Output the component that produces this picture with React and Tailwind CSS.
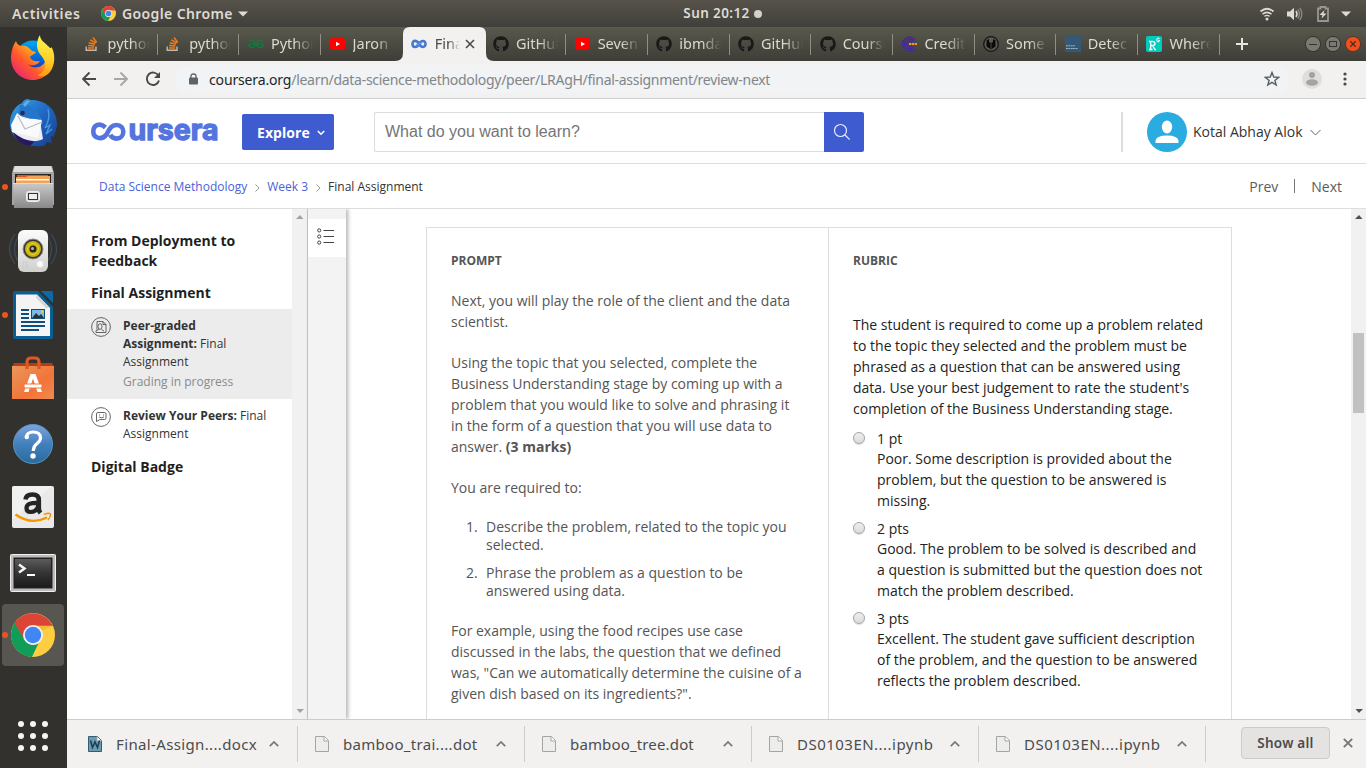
import React from "react";
import { FaGithub } from "react-icons/fa";
import { SiGeeksforgeeks } from "react-icons/si";

const UI = "font-['Noto_Sans','Open_Sans',sans-serif]";

function ChromeLogo({ size }) {
  return (
    <svg width={size} height={size} viewBox="0 0 44 44" className="shrink-0">
      <circle cx="22" cy="22" r="22" fill="#ffcd40" />
      <path d="M3 11 A22 22 0 0 1 41 11.5 L42 13 H22 L13.5 27 Z" fill="#db4437" />
      <path d="M3.5 10.2 L13.8 27 A9.8 9.8 0 0 0 27.5 30.3 L21 44 A22 22 0 0 1 3.5 10.2 Z" fill="#0f9d58" />
      <path d="M22 12.2 H42 L31.2 18 Z" fill="#e9a92e" opacity=".45" />
      <circle cx="22" cy="22" r="10" fill="#f1f1f1" />
      <circle cx="22" cy="22" r="8.2" fill="#4285f4" />
    </svg>
  );
}

function Firefox() {
  return (
    <svg width="46" height="48" viewBox="0 0 46 48">
      <defs>
        <linearGradient id="ffa" x1="1" y1="0" x2="0" y2="1">
          <stop offset="0" stopColor="#fff44f" />
          <stop offset=".35" stopColor="#ffb01f" />
          <stop offset=".6" stopColor="#ff5a2b" />
          <stop offset="1" stopColor="#e3128b" />
        </linearGradient>
        <linearGradient id="ffb" x1="0" y1="0" x2="0" y2="1">
          <stop offset="0" stopColor="#00a7f0" />
          <stop offset=".6" stopColor="#0a57d0" />
          <stop offset="1" stopColor="#3b1b8f" />
        </linearGradient>
        <linearGradient id="ffc" x1="0" y1="0" x2="0" y2="1">
          <stop offset="0" stopColor="#fff44f" />
          <stop offset=".6" stopColor="#ffd02a" />
          <stop offset="1" stopColor="#ff9a14" />
        </linearGradient>
      </defs>
      <circle cx="23" cy="24" r="18.5" fill="url(#ffb)" />
      <path d="M6 6 C7 9 8 10 11 11 C15 10 18 11 22 16 L26 17 C24 20 21 20 20 22 C21 26 27 27 30 26 C27 31 21 31 18 29 C23 35 33 33 36 25 L44 22 C44 36 34 45 23 45 C10 45 1 35 1 23 C1 17 3 10 6 6Z" fill="url(#ffa)" />
      <path d="M30 0 C30 5 34 7 38 11 C40 13 41 14 41.5 12 C45 18 46 29 40 37 C36 42 30 42 28 40 C35 37 37 30 34 25 C32 20 27 18 27 10 C27 6 28 3 30 0Z" fill="url(#ffc)" />
    </svg>
  );
}

function Thunderbird() {
  return (
    <svg width="50" height="50" viewBox="0 0 50 50">
      <defs>
        <linearGradient id="tb" x1="0" y1="0" x2="1" y2="1">
          <stop offset="0" stopColor="#31a4e6" />
          <stop offset=".5" stopColor="#2068c4" />
          <stop offset="1" stopColor="#173b8a" />
        </linearGradient>
      </defs>
      <path d="M14 5 C16 1 20 0 22 2 C35 1 49 10 49 26 C49 32 46 36 46 39 L43 38 L44 45 L39 44 L36 48 C22 50 4 44 2 28 C1 18 6 8 14 5Z" fill="url(#tb)" />
      <path d="M5 34 C8 43 14 46 22 48 L26 44Z" fill="#29175f" />
      <path d="M8 17 L32 23 L35 41 C25 46 13 41 5 34 Z" fill="#ececf2" />
      <path d="M3 27 L9 15 L16 21 L32 20 L34 23 L30 40 L4 34Z" fill="#fafafc" />
      <path d="M10 18 L17 31 L34 24" fill="none" stroke="#b9bcc6" strokeWidth="1.2" />
      <path d="M12 7 C22 6 31 11 33 22 C25 20 18 22 11 15 Z" fill="#2575cc" />
      <path d="M15 7 C18 2 20 2 22 3 L17 9Z" fill="#6aacd8" />
      <circle cx="14.5" cy="15" r="2.3" fill="#262c54" />
      <path d="M40 11 C42 18 40 25 37 30 L42 27 L38 36 L44 31" fill="none" stroke="#4a9be0" strokeWidth="1.3" />
    </svg>
  );
}

function Files() {
  return (
    <svg width="44" height="46" viewBox="0 0 44 46">
      <defs>
        <linearGradient id="fl" x1="0" y1="0" x2="0" y2="1">
          <stop offset="0" stopColor="#c9c9c9" />
          <stop offset="1" stopColor="#898989" />
        </linearGradient>
      </defs>
      <path d="M3 2 H41 L43 9 V41 H1 V9Z" fill="#a5a5a5" />
      <path d="M4 2 H40 L42 8 H2Z" fill="#dedede" />
      <rect x="4" y="10" width="36" height="10" fill="#2b2624" />
      <rect x="6" y="11" width="31" height="4" fill="#d4592a" />
      <path d="M5 13 H15 L17 12 H39 V19 H5Z" fill="#f5a455" />
      <rect x="5" y="15" width="33" height="1.4" fill="#fff" />
      <path d="M2 19 H42 V44 H3Z" fill="url(#fl)" />
      <path d="M2 19.5 H42" stroke="#ddd" />
      <rect x="15.5" y="27.500" width="13" height="10" rx="2" fill="#ddd" stroke="#eee" />
      <rect x="17.500" y="29.500" width="9" height="6" fill="#eee" stroke="#333" />
    </svg>
  );
}

function Rhythmbox() {
  return (
    <svg width="50" height="48" viewBox="0 0 50 48" className="-mt-[3px]">
      <defs>
        <linearGradient id="rb" x1="0" y1="0" x2="0" y2="1">
          <stop offset="0" stopColor="#fcfcfc" />
          <stop offset="1" stopColor="#cfcfcb" />
        </linearGradient>
      </defs>
      <g fill="none" stroke="#3d4c5c" strokeWidth="1.2">
        <path d="M7 8 Q-4 23 7 38 M10 11 Q3 23 10 35 M43 8 Q54 23 43 38 M40 11 Q47 23 40 35" />
      </g>
      <rect x="10" y="4" width="30" height="42" rx="6" fill="url(#rb)" />
      <circle cx="25" cy="23" r="10" fill="#353535" stroke="#8c8c8c" />
      <circle cx="25" cy="23" r="8" fill="#c7b20a" />
      <circle cx="25" cy="23" r="5.500" fill="none" stroke="#e5d536" />
      <circle cx="25" cy="23" r="3.500" fill="#292929" />
      <circle cx="24.5" cy="22.5" r="1.500" fill="#b5b5b5" />
      <circle cx="32" cy="38" r="3.500" fill="#fafafa" stroke="#ddd" />
      <rect x="15" y="36" width="4" height="5" fill="none" stroke="#ccc" />
    </svg>
  );
}

function Writer() {
  return (
    <svg width="40" height="48" viewBox="0 0 40 48">
      <path d="M2 0 H25 L40 16 V46 Q40 48 38 48 H2 Q0 48 0 46 V2 Q0 0 2 0Z" fill="#0b5e94" />
      <path d="M28 0 H39 Q40 0 40 2 V12Z" fill="#0b6aa8" />
      <path d="M3 3.5 H24 L37 17 V45 H3Z" fill="#f4f4f4" />
      <path d="M24 3.5 L37 17 H33 L23 7Z" fill="#d5d5d5" />
      <path d="M8 19 H16 M8 23 H16 M8 27 H16 M8 31 H32 M8 35 H32 M8 39 H26" stroke="#104f7d" strokeWidth="1.8" />
      <rect x="18.500" y="18.500" width="13" height="9" fill="#7dbbe6" stroke="#104f7d" />
      <path d="M19 27 L23 22 L26 25 L28 23 L31 27Z" fill="#313131" />
      <circle cx="29.500" cy="20.500" r="1.200" fill="#f5ce46" />
    </svg>
  );
}

function Software() {
  return (
    <svg width="42" height="44" viewBox="0 0 42 44" className="-mt-[2px]">
      <defs>
        <linearGradient id="sw" x1="0" y1="0" x2="1" y2="1">
          <stop offset="0" stopColor="#e8975b" />
          <stop offset=".6" stopColor="#f37438" />
          <stop offset="1" stopColor="#f08a50" />
        </linearGradient>
      </defs>
      <path d="M2 7 H40 L42 11 H0Z" fill="#b43c16" />
      <rect y="10" width="42" height="33" fill="url(#sw)" />
      <path d="M15 13 V6 Q15 2 19 2 H23 Q27 2 27 6 V13" fill="none" stroke="#df5724" strokeWidth="3.200" />
      <path d="M18.500 18 H23.500 L30 36 H25.500 L21 22.500 L16.500 36 H12Z" fill="#fff" />
      <rect x="12" y="28" width="18" height="4" rx="1" fill="#fff" stroke="#ee763c" />
    </svg>
  );
}

function Help() {
  return (
    <svg width="42" height="42" viewBox="0 0 42 42" className="mt-[2px] overflow-visible">
      <defs>
        <linearGradient id="hp" x1="0" y1="0" x2="0" y2="1">
          <stop offset="0" stopColor="#7ea3de" />
          <stop offset=".5" stopColor="#4280bd" />
          <stop offset="1" stopColor="#296b9b" />
        </linearGradient>
      </defs>
      <circle cx="21" cy="21" r="19.500" fill="url(#hp)" stroke="#5596c4" />
      <path d="M14 14.500 Q15 9 21 9 Q28.500 9 28.500 15 Q28.500 18 25 20.500 Q21.500 23 21.200 28" fill="none" stroke="#fff" strokeWidth="3.200" />
      <circle cx="14.800" cy="14" r="2.200" fill="#fff" />
      <circle cx="21" cy="33" r="2.700" fill="#fff" />
    </svg>
  );
}

function Amazon() {
  return (
    <svg width="42" height="42" viewBox="0 0 42 42">
      <rect width="42" height="42" rx="2" fill="#e9e9e9" />
      <path d="M0 40 V2 Q0 0 2 0 H40 L0 34Z" fill="#f4f4f4" opacity=".7" />
      <path d="M13.500 13.500 Q14 8.500 20.500 8.500 Q26.800 8.500 26.800 14 V22 Q26.800 25 28.500 27" fill="none" stroke="#242424" strokeWidth="4.600" />
      <path d="M26 16.800 Q14.500 16.500 14.500 22 Q14.500 26 18.500 26 Q25 26 26.500 19" fill="none" stroke="#242424" strokeWidth="4.200" />
      <path d="M3.500 28.500 Q19 39.500 35 31.500" fill="none" stroke="#f79400" strokeWidth="2.400" />
      <path d="M32 28.500 Q37 26.500 38.500 28 Q39 30 36 34" fill="none" stroke="#f79400" strokeWidth="1.500" />
    </svg>
  );
}

function Terminal() {
  return (
    <svg width="46" height="38" viewBox="0 0 46 38" className="mt-[4px]">
      <defs>
        <linearGradient id="tm" x1="0" y1="0" x2="0" y2="1">
          <stop offset="0" stopColor="#5b5b5b" />
          <stop offset=".5" stopColor="#343434" />
          <stop offset="1" stopColor="#1c1c1c" />
        </linearGradient>
      </defs>
      <rect x=".5" y=".5" width="45" height="37" rx="1" fill="#bcbcbc" stroke="#efefef" />
      <rect x="3.500" y="3.500" width="39" height="31" fill="#222" />
      <rect x="5" y="5" width="36" height="28" fill="url(#tm)" />
      <path d="M9 10.500 L14.500 14.500 L9 18.500" fill="none" stroke="#f5f5f5" strokeWidth="2.500" />
      <path d="M17 21 H25" stroke="#fff" strokeWidth="2" />
    </svg>
  );
}

const DOCK = [
  { icon: <Firefox />, running: false },
  { icon: <Thunderbird />, running: false },
  { icon: <Files />, running: true },
  { icon: <Rhythmbox />, running: false },
  { icon: <Writer />, running: true },
  { icon: <Software />, running: false },
  { icon: <Help />, running: false },
  { icon: <Amazon />, running: false },
  { icon: <Terminal />, running: false },
];

function Dot() {
  return <span className="absolute left-[2px] top-1/2 -mt-[3px] size-[6px] rounded-full bg-[#e95420]" />;
}

function Dock() {
  return (
    <aside className="flex w-[67px] shrink-0 flex-col bg-[#32312d]">
      {DOCK.map((d, i) => (
        <div key={i} className="relative flex h-16 w-[66px] items-center justify-center">
          {d.running && <Dot />}
          {d.icon}
        </div>
      ))}
      <div className="relative ml-[2px] mt-[1px] flex size-[62px] items-center justify-center rounded bg-[#585651]">
        <span className="absolute left-0 top-[28px] size-[6px] rounded-full bg-[#e95420]" />
        <ChromeLogo size={44} />
      </div>
      <div className="ml-[18px] mt-[55px] grid w-[30px] grid-cols-3 gap-[6px]">
        {Array.from({ length: 9 }, (_, i) => (
          <span key={i} className="size-[6px] rounded-full bg-[#f5f5f3]" />
        ))}
      </div>
    </aside>
  );
}

function TopBar() {
  return (
    <div className={`grid h-[27px] shrink-0 grid-cols-[600px_245px_521px] items-center bg-linear-to-b from-[#57534b] to-[#403f3a] text-[14px] font-semibold text-[#dfdbd2] ${UI}`}>
      <div className="flex items-center pl-3">
        <span className="w-[89px] tracking-[0.6px]">Activities</span>
        <ChromeLogo size={15} />
        <span className="ml-[6px] whitespace-nowrap tracking-[0.38px]">Google Chrome</span>
        <svg width="10" height="6" className="ml-[5px]"><path d="M0 0.500 H10 L5 5.500Z" fill="#dfdbd2" /></svg>
      </div>
      <div className="flex items-center justify-center">
        <span className="whitespace-nowrap text-[13.500px] tracking-[0.4px]">Sun 20:12</span>
        <span className="ml-1 size-2 rounded-full bg-[#d5d1c8]" />
      </div>
      <div className="flex items-center justify-end pr-[15px]">
        <svg width="16" height="14" viewBox="0 0 16 14" fill="none" stroke="#dfdbd2">
          <path d="M1.500 4.500 Q8 -1 14.500 4.500" strokeWidth="1.700" />
          <path d="M3.500 7.200 Q8 3.500 12.500 7.200" strokeWidth="1.500" />
          <path d="M5.500 9.400 Q8 7.400 10.500 9.400" strokeWidth="1.400" />
          <circle cx="8" cy="12" r="1.500" fill="#dfdbd2" stroke="none" />
        </svg>
        <svg width="16" height="14" viewBox="0 0 16 14" className="ml-3">
          <path d="M0 4.500 H3 L7 .8 V13.200 L3 9.500 H0Z" fill="#dfdbd2" />
          <path d="M9 4 Q11 7 9 10" fill="none" stroke="#dfdbd2" strokeWidth="1.500" />
          <path d="M10.800 2.300 Q14 7 10.800 11.700 M12.800 .8 Q17 7 12.800 13.200" fill="none" stroke="#8d8a83" strokeWidth="1.300" />
        </svg>
        <svg width="12" height="16" viewBox="0 0 12 16" className="ml-[14px]">
          <path d="M1 2.500 H3.500 V1 H8.500 V2.500 H11 V15 H1Z" fill="none" stroke="#99968f" strokeWidth="1.800" />
          <path d="M7.500 4 L2.500 9 H5.500 L4.500 12.500 L9.500 7.500 H6.500Z" fill="#dfdbd2" />
        </svg>
        <svg width="10" height="6" className="ml-3"><path d="M0 0.500 H10 L5 5.500Z" fill="#dfdbd2" /></svg>
      </div>
    </div>
  );
}

const YouTube = () => (
  <svg width="15" height="12" viewBox="0 0 15 12" className="shrink-0">
    <rect width="15" height="12" rx="2.500" fill="#f00" />
    <path d="M6 3.800 L10 6 L6 8.200Z" fill="#fff" />
  </svg>
);
const Github = () => <FaGithub className="size-4 shrink-0 text-[#1b1817]" />;
const Stack = () => (
  <svg width="14" height="16" viewBox="0 0 14 16" fill="none" className="shrink-0">
    <path d="M1.200 10.500 V14.300 H11 V10.500" stroke="#bcbbbb" strokeWidth="1.400" />
    <path d="M3 12 H9.300 M3.100 9.500 L9.500 10 M3.700 6.800 L9.900 8.300 M5.300 3.900 L10.800 7 M8 1.500 L11.800 6.400" stroke="#f47a14" strokeWidth="1.500" />
  </svg>
);
const LoopIcon = () => (
  <svg width="16" height="10" viewBox="0 0 16 10" fill="none" className="shrink-0">
    <path d="M8 4.800 C6 1 1.500 .8 1.500 5 C1.500 9 6 9 8 5.200 C10 1 14.500 1 14.500 5 C14.500 9 10 9 8 4.800Z" stroke="#4777cf" strokeWidth="2.600" />
    <path d="M5 5 Q6.500 6.800 8 5 T11 5" stroke="#76a4e8" strokeWidth="1" />
  </svg>
);
const Credit = () => (
  <svg width="16" height="16" viewBox="0 0 16 16" fill="none" className="shrink-0">
    <circle cx="8" cy="8" r="7.500" fill="#4a4168" />
    <path d="M14 3.500 A7 7 0 1 0 14 12.500 M12.500 5 A5 5 0 1 0 12.500 11 M11 6 A3 3 0 1 0 11 10" stroke="#4022a4" />
    <path d="M8 8 H16" stroke="#ff9315" strokeWidth="2" strokeDasharray="2.300 .6" />
  </svg>
);
const Cube = () => (
  <svg width="16" height="16" viewBox="0 0 16 16" className="shrink-0">
    <circle cx="8" cy="8" r="7.300" fill="#5a5850" stroke="#151515" strokeWidth="1.300" />
    <path d="M3.500 4.500 L6 3 V6 L8 7 L10 6 V3 L12.500 4.500 V10.500 L8 13.500 L3.500 10.500Z" fill="#0b0b0b" />
    <path d="M8 7 V13" stroke="#47453f" />
  </svg>
);
const Towards = () => (
  <svg width="16" height="16" viewBox="0 0 16 16" className="shrink-0">
    <rect width="16" height="16" fill="#355876" />
    <path d="M1 9.800 H10 M1 12.500 H13" stroke="#9bb1c2" strokeWidth="1" strokeDasharray="2 .4" />
  </svg>
);
const ResearchGate = () => (
  <svg width="16" height="16" viewBox="0 0 16 16" className="shrink-0">
    <rect width="16" height="16" rx="2" fill="#00ccbb" />
    <path d="M3 5.500 H6.500 Q9 5.500 9 7.500 Q9 9.500 6.500 9.500 H5 M4.700 5.500 V13.500 M3 13.500 H6.500 M6.500 9.500 L9 13.500 H10" fill="none" stroke="#fff" strokeWidth="1.300" />
    <path d="M13.500 3 Q13 2 12 2 Q10.800 2 10.800 4 Q10.800 6 12 6 Q13.500 6 13.500 4.300 H12.200" fill="none" stroke="#fff" strokeWidth="1" />
  </svg>
);

const TABS = [
  { icon: <Stack />, t: "python" },
  { icon: <Stack />, t: "python" },
  { icon: <SiGeeksforgeeks className="size-4 shrink-0 text-[#0f7a41]" />, t: "Python" },
  { icon: <YouTube />, t: "Jaron", last: true },
  { icon: <LoopIcon />, t: "Final", active: true },
  { icon: <Github />, t: "GitHub" },
  { icon: <YouTube />, t: "Seven" },
  { icon: <Github />, t: "ibmda" },
  { icon: <Github />, t: "GitHub" },
  { icon: <Github />, t: "Course" },
  { icon: <Credit />, t: "Credit" },
  { icon: <Cube />, t: "Some" },
  { icon: <Towards />, t: "Detec" },
  { icon: <ResearchGate />, t: "Where" },
];

const FADE = "[mask-image:linear-gradient(to_right,#000_55%,transparent_100%)]";

function TabStrip() {
  return (
    <div className={`flex h-[34px] shrink-0 bg-linear-to-b from-[#5a594d] to-[#3e3d37] pl-[9px] text-[14.500px] text-[#dcd9cf] ${UI}`}>
      {TABS.map((tab, i) =>
        tab.active ? (
          <div key={i} className="relative z-10 flex w-[81.700px] shrink-0 items-center">
            <svg width="99" height="34" viewBox="0 0 99 34" className="absolute -left-[8px] top-0">
              <path d="M0 34 Q8 34 8 26 V7 Q8 0 15 0 H84 Q91 0 91 7 V26 Q91 34 99 34Z" fill="#f2f1f0" />
            </svg>
            <div className="relative flex w-full items-center pl-[8px]">
              {tab.icon}
              <span className={`ml-[8px] w-[25px] overflow-hidden text-[#4b4a48] ${FADE}`}>{tab.t}</span>
              <svg width="10" height="10" viewBox="0 0 10 10" className="ml-[5px]"><path d="M1 1 L9 9 M9 1 L1 9" stroke="#4b4a48" strokeWidth="1.600" /></svg>
            </div>
          </div>
        ) : (
          <div key={i} className="flex w-[81.700px] shrink-0 items-center pl-[8.500px]">
            <span className="flex w-[23px] shrink-0">{tab.icon}</span>
            <span className={`w-[42px] overflow-hidden whitespace-nowrap ${FADE}`}>{tab.t}</span>
            {!tab.last && <span className="ml-auto h-[21px] w-px bg-[#8f8d84]" />}
          </div>
        )
      )}
      <div className="flex flex-1 items-center pl-[16px]">
        <svg width="12" height="12" viewBox="0 0 12 12"><path d="M6 0 V12 M0 6 H12" stroke="#e8e6df" strokeWidth="2" /></svg>
        <div className="ml-auto flex gap-[4px] pr-[5px]">
          <svg width="16" height="16" viewBox="0 0 16 16"><circle cx="8" cy="8" r="7.600" fill="#7b7971" stroke="#34332e" /><path d="M4 8.500 H12" stroke="#34332e" /></svg>
          <svg width="16" height="16" viewBox="0 0 16 16"><circle cx="8" cy="8" r="7.600" fill="#7b7971" stroke="#34332e" /><rect x="4.500" y="5.500" width="7" height="5" fill="none" stroke="#34332e" /></svg>
          <svg width="16" height="16" viewBox="0 0 16 16"><circle cx="8" cy="8" r="7.600" fill="#f0501e" stroke="#5a3520" /><path d="M5.300 5.300 L10.700 10.700 M10.700 5.300 L5.300 10.700" stroke="#45301f" strokeWidth="1.300" /></svg>
        </div>
      </div>
    </div>
  );
}

function Toolbar() {
  return (
    <div className={`flex h-[38px] shrink-0 items-center border-b border-[#cfcecc] bg-[#f2f1f0] pb-px ${UI}`}>
      <svg width="80" height="16" viewBox="0 0 80 16" fill="none" strokeWidth="1.900" className="ml-[15px]">
        <path d="M14 8 H1.500 M7.500 1.500 L1 8 L7.500 14.500" stroke="#48484a" />
        <path d="M32 8 H45 M38.500 1.500 L45 8 L38.500 14.500" stroke="#a6a6a6" />
        <path d="M76.500 4.800 A6.200 6.200 0 1 0 77 9.500" stroke="#48484a" />
        <path d="M78 1 V7 H72Z" fill="#48484a" />
      </svg>
      <div className="ml-[13px] flex h-7 w-[1114px] items-center rounded-full bg-[#f1f3f4] pl-[14px] pr-[9px]">
        <svg width="9" height="12" viewBox="0 0 9 12"><rect y="4.500" width="9" height="7" rx="1" fill="#5f6368" /><path d="M2 5 V3 Q2 1 4.500 1 Q7 1 7 3 V5" fill="none" stroke="#5f6368" strokeWidth="1.300" /></svg>
        <span className="ml-[11px] whitespace-nowrap text-[14px] tracking-[-0.29px] text-[#80868b]">
          <span className="tracking-[-0.15px] text-[#242628]">coursera.org</span>/learn/data-science-methodology/peer/LRAgH/final-assignment/review-next
        </span>
        <svg width="16" height="16" viewBox="0 0 16 16" className="ml-auto"><path d="M8 1.500 L9.800 6 L14.700 6.300 L10.900 9.400 L12.200 14 L8 11.400 L3.800 14 L5.100 9.400 L1.300 6.300 L6.200 6Z" fill="none" stroke="#5a5e63" strokeWidth="1.400" /></svg>
      </div>
      <svg width="20" height="20" viewBox="0 0 20 20" className="ml-[13px]"><circle cx="10" cy="10" r="10" fill="#dedede" /><circle cx="10" cy="6" r="3" fill="#a3a3a3" /><ellipse cx="10" cy="13.500" rx="6" ry="3.200" fill="#a3a3a3" /></svg>
      <svg width="4" height="14" viewBox="0 0 4 14" className="ml-[21px]" fill="#48484a"><circle cx="2" cy="2" r="1.600" /><circle cx="2" cy="7" r="1.600" /><circle cx="2" cy="12" r="1.600" /></svg>
    </div>
  );
}

function CourseraLogo() {
  return (
    <svg width="128" height="20" viewBox="0 0 128 20" className="shrink-0 overflow-visible">
      <path d="M14.500 5.500 C9 0 2.300 3 2.300 9.500 C2.300 16.500 11 18.500 15.500 12.500 C18 8 19.500 3 25.500 3 C30 3 32.300 6 32.300 9.800 C32.300 13.800 29.500 16.600 25.500 16.600 C22 16.600 20 14.500 19.200 12.800" fill="none" stroke="#5474df" strokeWidth="4.600" />
      <text x="37.500" y="18" textLength="90" lengthAdjust="spacingAndGlyphs" fill="#5474df" stroke="#5474df" strokeWidth="1.300" className="font-['Inter',sans-serif] text-[29px] font-bold">ursera</text>
    </svg>
  );
}

function Header() {
  return (
    <header className="flex h-[65px] shrink-0 items-center border-b border-[#ddd] bg-white pl-6 pt-[2px]">
      <CourseraLogo />
      <button className="ml-[23px] flex h-9 w-[92px] items-center rounded-xs bg-[#3f5bd0] pl-[15px] text-[14px] font-bold text-white">
        <span className="tracking-[0.05px]">Explore</span>
        <svg width="8" height="6" viewBox="0 0 8 6" className="ml-[7px] mt-[2px]"><path d="M.8 1 L4 4.200 L7.200 1" fill="none" stroke="#fff" strokeWidth="1.600" /></svg>
      </button>
      <div className="ml-10 flex h-10 w-[490px]">
        <div className="flex flex-1 items-center rounded-l-xs border border-r-0 border-[#ddd] pl-[10px] font-['Liberation_Sans',sans-serif] text-[16px] text-[#757575]">What do you want to learn?</div>
        <div className="flex w-10 items-center justify-center rounded-r-xs bg-[#3f5bd0]">
          <svg width="18" height="18" viewBox="0 0 18 18" fill="none" stroke="#e7ebfb" strokeWidth="1.200" className="-ml-[4px]"><circle cx="7.500" cy="7.500" r="6" /><path d="M12 12 L16.700 16.700" /></svg>
        </div>
      </div>
      <div className="ml-[257px] h-10 w-[2px] bg-[#ddd]" />
      <svg width="40" height="40" viewBox="0 0 40 40" className="ml-6"><circle cx="20" cy="20" r="20" fill="#2aace0" /><ellipse cx="20" cy="15" rx="5.200" ry="6.500" fill="#fff" /><path d="M8.500 31 V29 Q9 23.500 20 23.500 Q31 23.500 31.500 29 V31Z" fill="#fff" /></svg>
      <span className="-mt-px ml-[6px] whitespace-nowrap text-[14px] text-[#333]">Kotal Abhay Alok</span>
      <svg width="11" height="7" viewBox="0 0 11 7" className="ml-[7px]"><path d="M.5 1 L5.500 6 L10.500 1" fill="none" stroke="#666" /></svg>
    </header>
  );
}

const Chevron = () => (
  <svg width="5" height="8" viewBox="0 0 5 8" className="mt-[2px]"><path d="M.5 .5 L4 4 L.5 7.500" fill="none" stroke="#999" /></svg>
);

function Crumbs() {
  return (
    <div className="flex h-[45px] shrink-0 items-center border-b border-[#ddd] bg-white pl-8 pr-6 text-[12px] text-[#4a62d6]">
      <div className="flex items-center pt-[2px]">
        <span>Data Science Methodology</span>
        <span className="ml-2"><Chevron /></span>
        <span className="ml-[7px]">Week 3</span>
        <span className="ml-2"><Chevron /></span>
        <span className="ml-[7px] text-[#333]">Final Assignment</span>
      </div>
      <div className="ml-auto flex items-center text-[14px] text-[#5b5b5b]">
        <span>Prev</span>
        <span className="mx-4 h-[14px] w-px bg-[#777]" />
        <span>Next</span>
      </div>
    </div>
  );
}

const Tri = ({ down, color }) => (
  <svg width="8" height="4" viewBox="0 0 8 4" className={down ? "rotate-180" : ""}><path d="M0 4 H7.500 L4 0Z" fill={color} /></svg>
);

function Sidebar() {
  return (
    <nav className="flex w-[241px] shrink-0 border-r border-[#c8c8c8]">
      <div className="w-[225px] pt-[22px] text-[#1f1f1f]">
        <h3 className="px-6 text-[14px] font-bold leading-5">From Deployment to Feedback</h3>
        <h3 className="mt-3 px-6 text-[14px] font-bold leading-5">Final Assignment</h3>
        <div className="mt-[6px] flex h-[90px] bg-[#ececec] pl-6 pt-2 text-[12px] leading-[18px] text-[#333]">
          <svg width="20" height="20" viewBox="0 0 20 20" fill="none" stroke="#555" strokeWidth=".9" className="shrink-0"><circle cx="10" cy="10" r="9.400" /><path d="M6 12.500 V4.500 H12 L15 7.500 V15.500 H5 V13.500 L8 12.500 M12 4.500 V7.500 H15 M10.500 12.500 L13 14" /><ellipse cx="9" cy="9.500" rx="2" ry="2.800" /></svg>
          <div className="ml-3 w-[145px]">
            <b>Peer-graded Assignment:</b> Final Assignment
            <div className="mt-[2px] text-[#8a8a8a]">Grading in progress</div>
          </div>
        </div>
        <div className="flex pl-6 pt-2 text-[12px] leading-[18px] text-[#333]">
          <svg width="20" height="20" viewBox="0 0 20 20" fill="none" stroke="#555" strokeWidth=".9" className="shrink-0"><circle cx="10" cy="10" r="9.400" /><path d="M7 5.500 H13.500 Q15 5.500 15 7 V11 Q15 12.500 13.500 12.500 H9 L5.500 14.500 V7 Q5.500 5.500 7 5.500Z M8 8 H9 M12 8 H13 M8 10 Q10.500 11.500 13 10" /></svg>
          <div className="ml-3 w-[150px]"><b>Review Your Peers:</b> Final Assignment</div>
        </div>
        <h3 className="mt-[14px] px-6 text-[14px] font-bold leading-5">Digital Badge</h3>
      </div>
      <div className="flex w-[15px] flex-col items-center justify-between bg-[#f1f1f1] py-[6px]">
        <Tri color="#a3a3a3" />
        <Tri down color="#a3a3a3" />
      </div>
    </nav>
  );
}

const OPTIONS = [
  ["1 pt", "Poor. Some description is provided about the problem, but the question to be answered is missing."],
  ["2 pts", "Good. The problem to be solved is described and a question is submitted but the question does not match the problem described."],
  ["3 pts", "Excellent. The student gave sufficient description of the problem, and the question to be answered reflects the problem described."],
];

function Content() {
  return (
    <main className="flex min-w-0 flex-1 bg-white">
      <div className="z-10 w-[38px] shrink-0 bg-[#f3f3f3] pt-[10px] shadow-[2px_0_4px_rgba(0,0,0,0.3)]">
        <div className="flex h-[38px] justify-center bg-white pr-[3px] pt-[9px]">
          <svg width="17" height="17" viewBox="0 0 17 17" fill="none" stroke="#444"><circle cx="2.200" cy="2.400" r="1.600" /><circle cx="2.200" cy="8.500" r="1.600" /><circle cx="2.200" cy="14.600" r="1.600" /><path d="M6.500 2.500 H17 M6.500 8.500 H17 M6.500 14.500 H17" /></svg>
        </div>
      </div>
      <div className="flex min-w-0 flex-1 pl-20 pt-[18px]">
        <div className="flex w-[806px] border border-b-0 border-[#ddd] text-[14px] leading-[21px]">
          <section className="w-[402px] border-r border-[#ddd] pl-6 pt-6 text-[#555]">
            <h4 className="text-[12px] font-bold leading-[18px]">PROMPT</h4>
            <p className="mt-5 w-[352px]">Next, you will play the role of the client and the data scientist.</p>
            <p className="mt-5 w-[352px]">Using the topic that you selected, complete the Business Understanding stage by coming up with a problem that you would like to solve and phrasing it in the form of a question that you will use data to answer. <b>(3 marks)</b></p>
            <p className="mt-5">You are required to:</p>
            <ol className="mt-5 flex flex-col gap-[10px] leading-[18px]">
              <li className="flex"><span className="w-[35px] shrink-0 pl-[15px]">1.</span><span className="w-[317px]">Describe the problem, related to the topic you selected.</span></li>
              <li className="flex"><span className="w-[35px] shrink-0 pl-[15px]">2.</span><span className="w-[280px]">Phrase the problem as a question to be answered using data.</span></li>
            </ol>
            <p className="mt-5 w-[354px]">For example, using the food recipes use case discussed in the labs, the question that we defined was, "Can we automatically determine the cuisine of a given dish based on its ingredients?".</p>
          </section>
          <section className="w-[402px] pl-6 pt-6 text-[#222]">
            <h4 className="text-[12px] font-bold leading-[18px] text-[#555]">RUBRIC</h4>
            <p className="mt-11 w-[354px]">The student is required to come up a problem related to the topic they selected and the problem must be phrased as a question that can be answered using data. Use your best judgement to rate the student's completion of the Business Understanding stage.</p>
            <div className="mt-[9px] flex flex-col gap-[7px]">
              {OPTIONS.map(([pts, text]) => (
                <div key={pts} className="flex h-[83px]">
                  <span className="mt-[4px] size-[12px] shrink-0 rounded-full border border-[#a5a5a5] bg-linear-to-b from-[#eee] to-[#dcdcdc] shadow-[0_1px_1px_#ddd]" />
                  <div className="ml-3 w-[328px]">
                    <div className="h-5">{pts}</div>
                    <p>{text}</p>
                  </div>
                </div>
              ))}
            </div>
          </section>
        </div>
      </div>
      <div className="flex w-[15px] shrink-0 flex-col items-center bg-[#f1f1f1] py-[6px]">
        <Tri color="#505050" />
        <div className="mt-[114px] h-20 w-[11px] bg-[#c1c1c1]" />
        <div className="mt-auto flex"><Tri down color="#505050" /></div>
      </div>
    </main>
  );
}

const FileIcon = ({ word }) => (
  <svg width="14" height="16" viewBox="0 0 14 16" className="-mt-px shrink-0">
    <path d="M.5 .5 H9.500 L13.500 4.500 V15.500 H.5Z" fill={word ? "#6b9cae" : "#ededeb"} stroke={word ? "#365b70" : "#a4a4a0"} />
    <path d="M9 .5 V5 H13.500" fill="#fff" stroke="#a4a4a0" />
    {word && <path d="M2.500 4.500 L4.500 11.500 L7 6 L9.500 11.500 L11.500 4.500" fill="none" stroke="#1f3d5c" strokeWidth="1.600" />}
  </svg>
);

const FILES = [
  { name: "Final-Assign....docx", spacing: "tracking-[0.36px]" },
  { name: "bamboo_trai....dot", spacing: "tracking-[0.3px]" },
  { name: "bamboo_tree.dot", spacing: "tracking-[0.15px]" },
  { name: "DS0103EN....ipynb", spacing: "tracking-[0.48px]" },
  { name: "DS0103EN....ipynb", spacing: "tracking-[0.48px]" },
];

function Downloads() {
  return (
    <footer className={`flex h-[49px] shrink-0 items-center border-t border-[#ccc] bg-[#f2f1f0] text-[15px] text-[#4c4c4c] ${UI}`}>
      {FILES.map((f, i) => (
        <div key={i} className={`flex h-9 shrink-0 items-center border-r border-[#ccc] pr-[18px] ${i === 0 ? "w-[231px] pl-[21px]" : "w-[227px] pl-[17px]"}`}>
          <FileIcon word={i === 0} />
          <span className={`ml-[14px] mt-[1px] whitespace-nowrap ${f.spacing}`}>{f.name}</span>
          <svg width="10" height="6" viewBox="0 0 10 6" className="ml-auto"><path d="M.8 5.200 L5 1 L9.200 5.200" fill="none" stroke="#777" strokeWidth="1.700" /></svg>
        </div>
      ))}
      <div className="-mt-[2px] ml-auto flex h-8 w-[89px] items-center justify-center rounded border border-[#cdcbc9] bg-[#e4e3e1] text-[13.500px] font-semibold tracking-[0.25px]">Show all</div>
      <svg width="10" height="10" viewBox="0 0 10 10" className="-mt-[2px] ml-[13px] mr-[13px]"><path d="M.8 .8 L9.200 9.200 M9.200 .8 L.8 9.200" stroke="#777" strokeWidth="1.900" /></svg>
    </footer>
  );
}

export default function App() {
  return (
    <div className="flex h-[768px] w-[1366px] flex-col overflow-hidden bg-white font-['Open_Sans',sans-serif]">
      <TopBar />
      <div className="flex min-h-0 flex-1">
        <Dock />
        <div className="flex min-w-0 flex-1 flex-col">
          <TabStrip />
          <Toolbar />
          <Header />
          <Crumbs />
          <div className="flex min-h-0 flex-1 overflow-hidden">
            <Sidebar />
            <Content />
          </div>
          <Downloads />
        </div>
      </div>
    </div>
  );
}
